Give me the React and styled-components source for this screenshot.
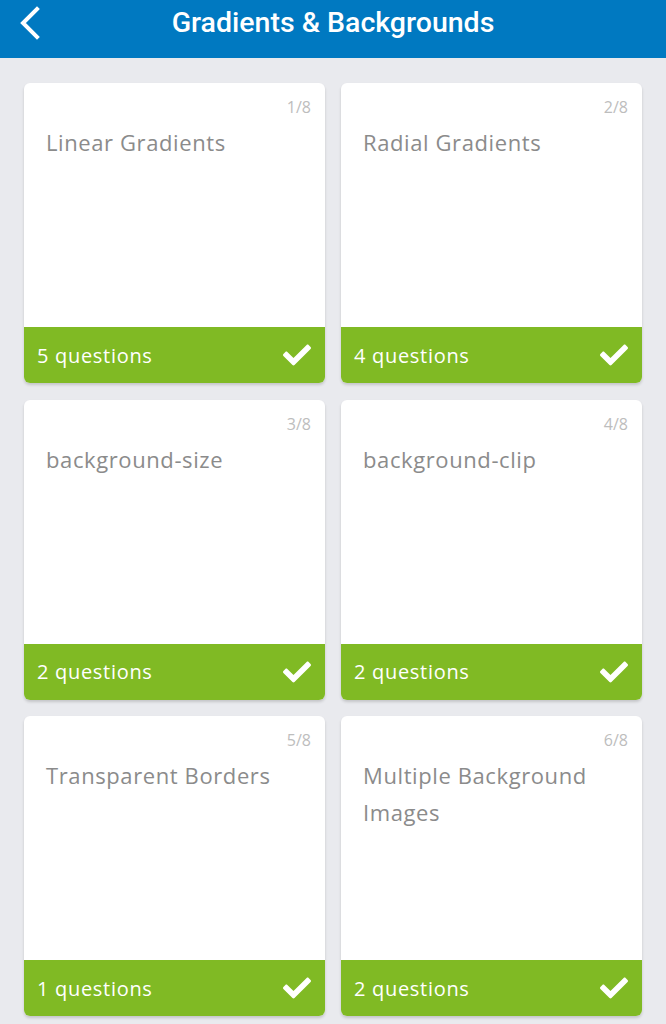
import React from "react";
import styled, { createGlobalStyle } from "styled-components";
import { FaCheck } from "react-icons/fa";

const GlobalStyle = createGlobalStyle`
  html, body {
    margin: 0;
    padding: 0;
    background: #e9eaee;
    font-family: "Open Sans", "Liberation Sans", Arial, sans-serif;
  }
`;

const topics = [
  { title: "Linear Gradients", count: 5 },
  { title: "Radial Gradients", count: 4 },
  { title: "background-size", count: 2 },
  { title: "background-clip", count: 2 },
  { title: "Transparent Borders", count: 1 },
  { title: "Multiple Background Images", count: 2 },
];

const Page = styled.div`
  width: 666px;
  min-height: 1024px;
  background: #e9eaee;
`;

const Header = styled.header`
  height: 58px;
  background: #0079c1;
  display: flex;
  align-items: center;
  justify-content: center;
  position: relative;
`;

const Title = styled.h1`
  margin: 0 0 12px;
  color: #ffffff;
  font-family: Roboto, "Liberation Sans", sans-serif;
  font-size: 28.5px;
  font-weight: 500;
  line-height: 34px;
`;

const BackButton = styled.button`
  position: absolute;
  left: 16px;
  top: 5px;
  width: 28px;
  height: 36px;
  padding: 0;
  border: none;
  background: transparent;
  display: flex;
  align-items: center;
  justify-content: center;
`;

const Grid = styled.div`
  display: grid;
  grid-template-columns: 301px 301px;
  grid-auto-rows: 300px;
  column-gap: 16px;
  row-gap: 16.5px;
  padding: 25px 24px 0;
`;

const Card = styled.div`
  background: #ffffff;
  border-radius: 6px;
  box-shadow: 0 2px 3px rgba(0, 0, 0, 0.16);
  display: flex;
  flex-direction: column;
  overflow: hidden;
`;

const Body = styled.div`
  flex: 1;
  position: relative;
  padding: 41px 12px 0 22px;
`;

const Index = styled.span`
  position: absolute;
  top: 13px;
  right: 14px;
  font-size: 16px;
  color: #bdbdbd;
`;

const CardTitle = styled.div`
  font-size: 22px;
  line-height: 37px;
  letter-spacing: 0.6px;
  color: #8b8b8b;
`;

const Footer = styled.div`
  height: 56px;
  background: #80ba24;
  display: flex;
  align-items: center;
  justify-content: space-between;
  padding: 0 14px 0 13px;
  color: #ffffff;
  font-size: 20px;
  letter-spacing: 0.7px;
`;

const Chevron = () => (
  <svg width="22" height="34" viewBox="0 0 22 34">
    <path
      d="M18 3 L4 17 L18 31"
      fill="none"
      stroke="#fff"
      strokeWidth="4"
      strokeLinecap="square"
    />
  </svg>
);

export default function App() {
  return (
    <Page>
      <GlobalStyle />
      <Header>
        <BackButton>
          <Chevron />
        </BackButton>
        <Title>Gradients &amp; Backgrounds</Title>
      </Header>
      <Grid>
        {topics.map((t, i) => (
          <Card key={t.title}>
            <Body>
              <Index>
                {i + 1}/{topics.length + 2}
              </Index>
              <CardTitle>{t.title}</CardTitle>
            </Body>
            <Footer>
              <span>{t.count} questions</span>
              <FaCheck size={28} />
            </Footer>
          </Card>
        ))}
      </Grid>
    </Page>
  );
}
